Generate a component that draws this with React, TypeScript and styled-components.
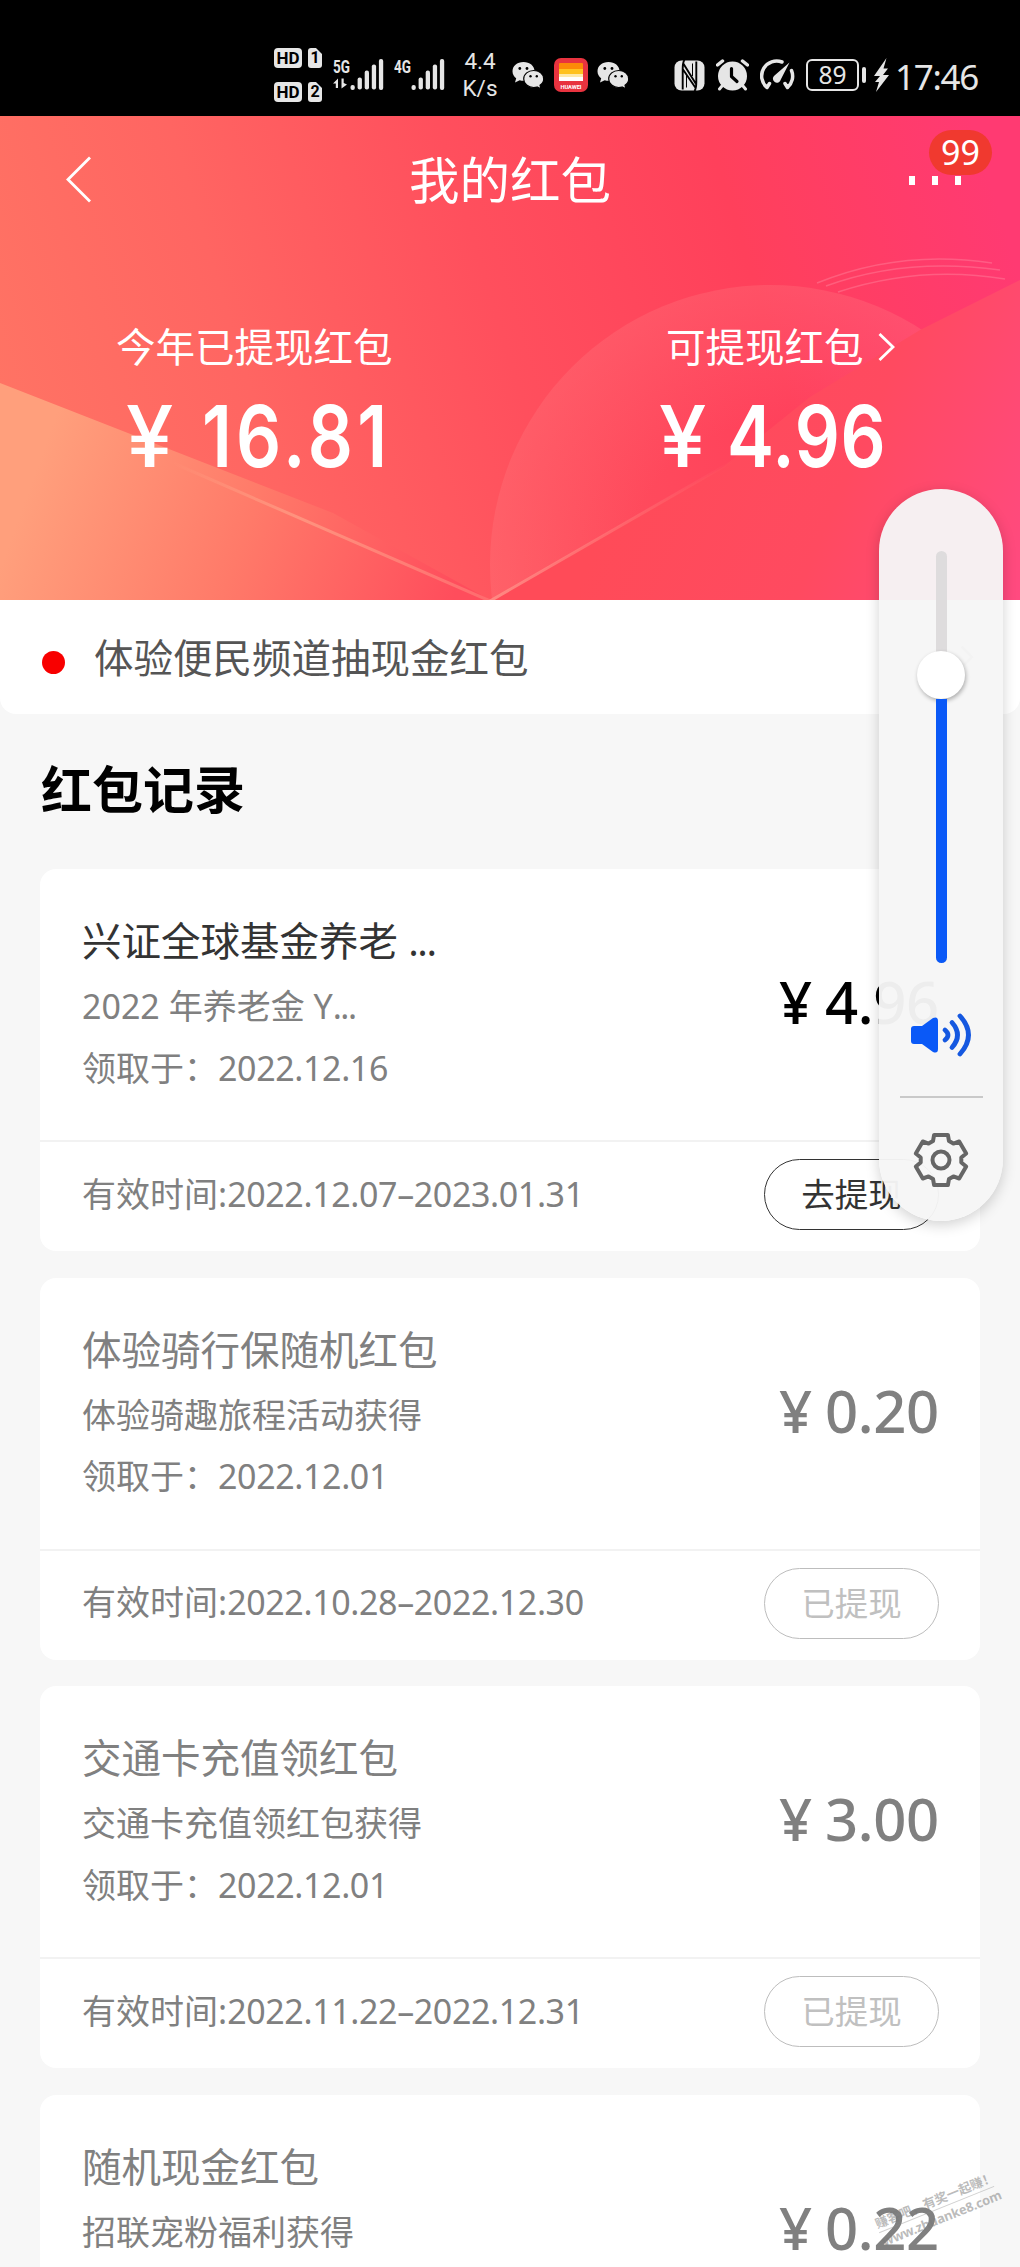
import React from "react";
import styled, { createGlobalStyle } from "styled-components";

const GlobalStyle = createGlobalStyle`
  * { box-sizing: border-box; }
  body {
    margin: 0;
    background: #f7f7f7;
    font-family: "Noto Sans", "Noto Sans CJK SC", sans-serif;
  }
  svg { display: block; }
`;

const Screen = styled.div`
  position: relative;
  width: 1020px;
  height: 2267px;
  overflow: hidden;
  background: #f7f7f7;
`;

/* ---------- status bar ---------- */

const StatusBar = styled.div`
  display: flex;
  align-items: center;
  height: 116px;
  padding: 34px 0 0 274px;
  background: #000;
  color: #e6e6e6;
`;

const StatusItem = styled.div<{ $w: number; $gap?: number }>`
  flex: none;
  width: ${(p) => p.$w}px;
  margin-left: ${(p) => p.$gap ?? 0}px;
`;

const SimColumn = styled(StatusItem)`
  display: flex;
  flex-direction: column;
  gap: 14px;
`;

const SimRow = styled.div`
  display: flex;
  gap: 6px;
`;

const HdTag = styled.span`
  width: 28px;
  height: 20px;
  border-radius: 4px;
  background: #e6e6e6;
  color: #000;
  font: 700 17px/20px Roboto, sans-serif;
  text-align: center;
`;

const SimTag = styled.span`
  width: 14px;
  height: 20px;
  border-radius: 3px;
  background: linear-gradient(225deg, #000 4px, #e6e6e6 4.5px);
  color: #000;
  font: 700 16px/20px Roboto, sans-serif;
  text-align: center;
`;

const NetSpeed = styled(StatusItem)`
  font: 400 22.5px/27px Roboto, sans-serif;
  text-align: center;
  white-space: nowrap;
`;

const Battery = styled(StatusItem)`
  display: flex;
  align-items: center;
  gap: 3px;
`;

const BatteryShell = styled.span`
  width: 53px;
  height: 32px;
  border: 2.5px solid #e6e6e6;
  border-radius: 6px;
  font: 400 24.5px/27px "Noto Sans", sans-serif;
  text-align: center;
`;

const BatteryTip = styled.span`
  width: 4px;
  height: 16px;
  border-radius: 2px;
  background: #e6e6e6;
`;

const Clock = styled(StatusItem)`
  font-size: 35px;
  line-height: 40px;
  padding-top: 4px;
  letter-spacing: -1.3px;
  white-space: nowrap;
`;

/* ---------- header ---------- */

const Header = styled.header`
  position: relative;
  height: 484px;
  color: #fff;
`;

const HeaderArt = styled.svg`
  position: absolute;
  inset: 0;
`;

const HeaderContent = styled.div`
  position: relative;
`;

const NavBar = styled.div`
  display: grid;
  grid-template-columns: 160px 1fr 160px;
  align-items: center;
  height: 128px;
`;

const NavTitle = styled.h1`
  margin: 0;
  font-size: 50.5px;
  font-weight: 400;
  line-height: 60px;
  text-align: center;
`;

const BackButton = styled.div`
  padding-left: 65px;
`;

const MoreButton = styled.div`
  position: relative;
  display: flex;
  gap: 17px;
  padding-left: 49px;
`;

const MoreDot = styled.i`
  width: 6px;
  height: 9px;
  background: #fff;
`;

const Badge = styled.span`
  position: absolute;
  left: 69px;
  top: -46px;
  width: 63px;
  height: 45px;
  border-radius: 23px;
  background: #f0392f;
  font-size: 34px;
  line-height: 45px;
  text-align: center;
`;

const Summary = styled.div`
  display: grid;
  grid-template-columns: 508px 512px;
  padding-top: 77px;
`;

const SummaryCell = styled.div<{ $indent: number }>`
  padding-left: ${(p) => p.$indent}px;
`;

const SummaryLabel = styled.div`
  display: flex;
  align-items: center;
  gap: 14px;
  font-size: 39.5px;
  line-height: 52px;
`;

const SummaryAmount = styled.div<{ $indent: number; $gap: number }>`
  display: flex;
  gap: ${(p) => p.$gap}px;
  height: 128px;
  margin-left: ${(p) => p.$indent}px;
  font: 600 85px/128px Inter, "Noto Sans", sans-serif;
`;

const SummaryYen = styled.span`
  font-weight: 500;
`;

const SummaryDigits = styled.span<{ $spread: number }>`
  letter-spacing: ${(p) => p.$spread}px;
  transform: scaleX(0.83);
  transform-origin: left;
`;

/* ---------- notice ---------- */

const Notice = styled.div`
  display: flex;
  align-items: center;
  height: 114px;
  padding: 0 46px 0 42px;
  border-radius: 0 0 16px 16px;
  background: #fff;
  color: #555;
  font-size: 39.5px;
  line-height: 56px;
`;

const RedDot = styled.i`
  width: 23px;
  height: 23px;
  margin: 11px 29px 0 0;
  border-radius: 50%;
  background: #f80000;
`;

const NoticeText = styled.span`
  flex: 1;
  padding-top: 2px;
`;

/* ---------- records ---------- */

const SectionTitle = styled.h2`
  height: 155px;
  margin: 0;
  padding-left: 41px;
  color: #000;
  font-size: 51px;
  font-weight: 700;
  line-height: 151px;
`;

const RecordList = styled.div`
  display: flex;
  flex-direction: column;
  gap: 26.5px;
  padding: 0 40px;
`;

const Card = styled.article`
  flex: none;
  height: 382px;
  border-radius: 16px;
  background: #fff;
  color: #808080;
`;

const CardBody = styled.div`
  display: flex;
  justify-content: space-between;
  height: 273px;
  padding: 39px 41px 0 42px;
  border-bottom: 2px solid #f2f2f2;
`;

const CardTitle = styled.div<{ $active?: boolean }>`
  margin-bottom: 2px;
  color: ${(p) => (p.$active ? "#333" : "#808080")};
  font-size: 39.5px;
  line-height: 66px;
`;

const CardLine = styled.div`
  font-size: 34px;
  line-height: 61.5px;
  white-space: nowrap;
`;

const Numeric = styled.span`
  letter-spacing: -0.38px;
`;

const Dots = styled.span`
  letter-spacing: -1.5px;
`;

const Amount = styled.div<{ $active?: boolean }>`
  display: flex;
  gap: 13px;
  align-self: flex-start;
  margin-top: 54px;
  color: ${(p) => (p.$active ? "#000" : "#808080")};
  font-size: 58px;
  font-weight: 500;
  line-height: 80px;
  letter-spacing: -0.3px;
`;

const CardFooter = styled.div`
  display: flex;
  align-items: center;
  justify-content: space-between;
  height: 109px;
  padding: 0 41px 4px 42px;
`;

const Action = styled.div<{ $active?: boolean }>`
  width: 175px;
  height: 71px;
  border: 1px solid ${(p) => (p.$active ? "#333" : "#bdbdbd")};
  border-radius: 36px;
  color: ${(p) => (p.$active ? "#333" : "#c0c0c0")};
  font-size: 33.5px;
  line-height: 69px;
  text-align: center;
`;

/* ---------- volume overlay ---------- */

const VolumePanel = styled.aside`
  position: absolute;
  left: 879px;
  top: 489px;
  display: flex;
  flex-direction: column;
  align-items: center;
  width: 124px;
  height: 732px;
  padding-top: 62px;
  border-radius: 62px;
  background: rgba(246, 246, 246, 0.965);
  box-shadow: 0 4px 14px rgba(0, 0, 0, 0.18);
`;

const Track = styled.div`
  display: flex;
  flex-direction: column;
  align-items: center;
  width: 11px;
  height: 412px;
  border-radius: 6px;
  background: #dedcdd;
`;

const Thumb = styled.div`
  flex: none;
  width: 48px;
  height: 48px;
  margin-top: 100px;
  border-radius: 50%;
  background: #fff;
  box-shadow: 1px 2px 4px rgba(0, 0, 0, 0.3);
`;

const TrackFill = styled.div`
  flex: 1;
  width: 11px;
  border-radius: 0 0 6px 6px;
  background: #0a59f7;
`;

const SpeakerSlot = styled.div`
  margin-top: 49px;
`;

const PanelDivider = styled.div`
  width: 83px;
  height: 2px;
  margin: 38px 0 32px;
  background: #c9c9c9;
`;

/* ---------- watermark ---------- */

const Watermark = styled.div`
  position: absolute;
  left: 875px;
  top: 2192px;
  width: 124px;
  color: rgba(120, 120, 120, 0.5);
  font-weight: 700;
  white-space: nowrap;
  transform: rotate(-22deg);
`;

const WatermarkTop = styled.div`
  font-size: 12.8px;
  line-height: 17px;
  border-bottom: 1px solid rgba(140, 140, 140, 0.4);
`;

const WatermarkUrl = styled.div`
  font-size: 13px;
  line-height: 19px;
  letter-spacing: -0.2px;
`;

function SignalIcon({ label, arrows }: { label: string; arrows?: boolean }) {
  return (
    <svg width="52" height="34" viewBox="0 0 52 34" fill="#e6e6e6">
      <text x="0" y="15" fontFamily="Roboto, sans-serif" fontWeight="700" fontSize="18" textLength="17" lengthAdjust="spacingAndGlyphs">
        {label}
      </text>
      {arrows && <path d="M0 25.500L5 20.500V30H2.800V25.500ZM8.500 20.500H10.700V25L14 26.500L8.500 30.500Z" />}
      {[0, 1, 2, 3, 4].map((i) => (
        <rect key={i} x={17.500 + i * 7.100} y={[27, 19.500, 12.500, 6.500, 1][i]} width="4.300" height={[5, 12, 19, 25, 31][i]} rx="2" />
      ))}
    </svg>
  );
}

function WeChatIcon() {
  return (
    <svg width="32" height="28" viewBox="0 0 32 28">
      <path d="M11.500 1C5 1 .5 5 .5 10.300c0 3 1.500 5.400 3.700 7L3 21.500l4.700-2.300c1.200.4 2.500.6 3.800.6 6.300 0 11-4.100 11-9.500S17.700 1 11.500 1Z" fill="#e6e6e6" />
      <path d="M21.700 9.500c-5.500 0-10 3.600-10 8.400s4.500 8.600 10 8.600c1.200 0 2.300-.2 3.300-.5l4 1.800-1-3.500c2.200-1.600 3.700-3.900 3.700-6.400 0-4.800-4.500-8.400-10-8.400Z" fill="#e6e6e6" stroke="#000" strokeWidth="1.200" />
      <g fill="#000">
        <circle cx="7.800" cy="7.500" r="1.400" />
        <circle cx="15" cy="7.500" r="1.400" />
        <circle cx="18.500" cy="15.300" r="1.200" />
        <circle cx="24.800" cy="15.300" r="1.200" />
      </g>
    </svg>
  );
}

function WalletAppIcon() {
  return (
    <svg width="34" height="34" viewBox="0 0 34 34">
      <rect width="34" height="34" rx="7" fill="#e8333f" />
      <rect x="5" y="5" width="24" height="7" rx="1" fill="#fc8a08" />
      <rect x="5" y="11" width="24" height="6" fill="#ffc21f" />
      <rect x="5" y="16" width="24" height="4" fill="#ffe9a8" />
      <rect x="5" y="19" width="24" height="4" fill="#fff" />
      <text x="6.500" y="30.500" fill="#fff" fontFamily="Roboto, sans-serif" fontSize="5.800" fontWeight="700" textLength="21">HUAWEI</text>
    </svg>
  );
}

function NfcIcon() {
  return (
    <svg width="31" height="31" viewBox="0 0 31 31">
      <rect x=".5" y=".5" width="30" height="30" rx="7" fill="#e6e6e6" />
      <path d="M8.700 29.500V9C8.700 4 9 2 10.500 0M9 3L22 24M22.300 1.500V22C22.300 27 22 29 20.500 31M22 28.500L9 9.500" fill="none" stroke="#000" strokeWidth="1.900" />
      <path d="M12.500 15V27.500M18.500 3.500V16" fill="none" stroke="#000" strokeWidth="1" />
    </svg>
  );
}

function AlarmIcon() {
  return (
    <svg width="33" height="32" viewBox="0 0 33 32">
      <circle cx="16.500" cy="17" r="14.500" fill="#e6e6e6" />
      <path d="M1.500 6L6.500 2M31.500 6L26.500 2" stroke="#e6e6e6" strokeWidth="3.500" strokeLinecap="round" />
      <path d="M6 27L3.500 30M27 27L29.500 30" stroke="#e6e6e6" strokeWidth="3" strokeLinecap="round" />
      <path d="M15.500 9.500V17.500L21 22.500" fill="none" stroke="#000" strokeWidth="3.200" strokeLinecap="round" strokeLinejoin="round" />
    </svg>
  );
}

function GaugeIcon() {
  return (
    <svg width="35" height="32" viewBox="0 0 35 32">
      <path d="M7 28.500A15 15 0 0 1 22 3M31.500 11.500A15 15 0 0 1 27.500 28.500M7 28.500L9.500 24.500M27.500 28.500L25 24.500" fill="none" stroke="#e6e6e6" strokeWidth="3.500" strokeLinecap="round" />
      <path d="M29.500 3.500L20.800 20.500A4 4 0 1 1 14.500 16.500Z" fill="#e6e6e6" />
    </svg>
  );
}

function HeaderBackground() {
  return (
    <HeaderArt width="1020" height="484" viewBox="0 0 1020 484">
      <defs>
        <linearGradient id="base" gradientUnits="userSpaceOnUse" x1="0" y1="330" x2="980" y2="30">
          <stop offset="0" stopColor="#ff7464" />
          <stop offset=".25" stopColor="#ff6562" />
          <stop offset=".5" stopColor="#ff4f5d" />
          <stop offset=".75" stopColor="#ff405b" />
          <stop offset="1" stopColor="#ff3a72" />
        </linearGradient>
        <linearGradient id="flap" gradientUnits="userSpaceOnUse" x1="30" y1="370" x2="440" y2="520">
          <stop offset="0" stopColor="#ff9f7c" />
          <stop offset=".5" stopColor="#ff7a69" />
          <stop offset="1" stopColor="#ff4d5c" />
        </linearGradient>
        <linearGradient id="fold" gradientUnits="userSpaceOnUse" x1="640" y1="320" x2="1020" y2="480">
          <stop offset="0" stopColor="#ff4b58" />
          <stop offset=".5" stopColor="#ff4a60" />
          <stop offset="1" stopColor="#ff4a80" />
        </linearGradient>
        <radialGradient id="disc" gradientUnits="userSpaceOnUse" cx="770" cy="449" r="280">
          <stop offset=".5" stopColor="#ff7a80" stopOpacity="0" />
          <stop offset="1" stopColor="#ff7a80" stopOpacity=".3" />
        </radialGradient>
        <linearGradient id="lineLeft">
          <stop offset="0" stopColor="#ffb08f" stopOpacity="0" />
          <stop offset=".4" stopColor="#ff9b84" stopOpacity=".8" />
          <stop offset="1" stopColor="#ff8a80" stopOpacity=".5" />
        </linearGradient>
        <linearGradient id="lineRight">
          <stop offset="0" stopColor="#ff9088" stopOpacity=".9" />
          <stop offset="1" stopColor="#ff8080" stopOpacity="0" />
        </linearGradient>
      </defs>
      <rect width="1020" height="484" fill="url(#base)" />
      <circle cx="770" cy="449" r="280" fill="url(#disc)" />
      <path d="M490 484L723 351L810 281L920 214L1020 164V484Z" fill="url(#fold)" />
      <path d="M0 267L133 319L333 397L490 484H0Z" fill="url(#flap)" />
      <path d="M173 347L490 485" stroke="url(#lineLeft)" strokeWidth="3" />
      <path d="M490 485L733 345" stroke="url(#lineRight)" strokeWidth="3" />
      <g fill="none" stroke="#ff8fa5" strokeOpacity=".4" strokeWidth="1.500">
        <path d="M817 167Q900 133 992 147" />
        <path d="M826 170Q905 141 1000 154" />
        <path d="M838 176Q920 149 1005 163" />
      </g>
    </HeaderArt>
  );
}

type RecordItem = {
  title: string;
  source: string;
  received: string;
  amount: string;
  period: string;
  active?: boolean;
  clipped?: boolean;
};

const records: RecordItem[] = [
  { title: "兴证全球基金养老 ", source: "2022 年养老金 Y", received: "2022.12.16", amount: "4.96", period: "2022.12.07–2023.01.31", active: true, clipped: true },
  { title: "体验骑行保随机红包", source: "体验骑趣旅程活动获得", received: "2022.12.01", amount: "0.20", period: "2022.10.28–2022.12.30" },
  { title: "交通卡充值领红包", source: "交通卡充值领红包获得", received: "2022.12.01", amount: "3.00", period: "2022.11.22–2022.12.31" },
  { title: "随机现金红包", source: "招联宠粉福利获得", received: "", amount: "0.22", period: "" },
];

function RecordCard({ item }: { item: RecordItem }) {
  return (
    <Card>
      <CardBody>
        <div>
          <CardTitle $active={item.active}>
            {item.title}
            {item.clipped && <Dots>...</Dots>}
          </CardTitle>
          <CardLine>
            {item.source}
            {item.clipped && <Dots>...</Dots>}
          </CardLine>
          {item.received && (
            <CardLine>领取于：<Numeric>{item.received}</Numeric></CardLine>
          )}
        </div>
        <Amount $active={item.active}>
          <span>¥</span>
          <span>{item.amount}</span>
        </Amount>
      </CardBody>
      {item.period && (
        <CardFooter>
          <CardLine>有效时间:<Numeric>{item.period}</Numeric></CardLine>
          <Action $active={item.active}>{item.active ? "去提现" : "已提现"}</Action>
        </CardFooter>
      )}
    </Card>
  );
}

function gearPath(cx: number, cy: number) {
  const points: string[] = [];
  for (let i = 0; i < 6; i++) {
    const mid = (i * 60 - 90) * (Math.PI / 180);
    [
      [-0.4, 20.5],
      [-0.27, 26],
      [0.27, 26],
      [0.4, 20.5],
    ].forEach(([a, r]) => points.push(`${(cx + r * Math.cos(mid + a)).toFixed(1)} ${(cy + r * Math.sin(mid + a)).toFixed(1)}`));
  }
  return `M${points.join("L")}Z`;
}

export default function App() {
  return (
    <Screen>
      <GlobalStyle />
      <StatusBar>
        <SimColumn $w={48}>
          <SimRow><HdTag>HD</HdTag><SimTag>1</SimTag></SimRow>
          <SimRow><HdTag>HD</HdTag><SimTag>2</SimTag></SimRow>
        </SimColumn>
        <StatusItem $w={52} $gap={11}><SignalIcon label="5G" arrows /></StatusItem>
        <StatusItem $w={52} $gap={9}><SignalIcon label="4G" /></StatusItem>
        <NetSpeed $w={36} $gap={16}>4.4<br />K/s</NetSpeed>
        <StatusItem $w={32} $gap={14}><WeChatIcon /></StatusItem>
        <StatusItem $w={34} $gap={10}><WalletAppIcon /></StatusItem>
        <StatusItem $w={32} $gap={9}><WeChatIcon /></StatusItem>
        <StatusItem $w={31} $gap={45}><NfcIcon /></StatusItem>
        <StatusItem $w={33} $gap={11}><AlarmIcon /></StatusItem>
        <StatusItem $w={35} $gap={11}><GaugeIcon /></StatusItem>
        <Battery $w={60} $gap={11}><BatteryShell>89</BatteryShell><BatteryTip /></Battery>
        <StatusItem $w={15} $gap={8}>
          <svg width="15" height="34" viewBox="0 0 15 34" fill="#e6e6e6">
            <path d="M12.500 0L0 18H6L1 24H5L2 34L15 17H9L14 10.500H9.500Z" />
          </svg>
        </StatusItem>
        <Clock $w={84} $gap={6}>17:46</Clock>
      </StatusBar>

      <Header>
        <HeaderBackground />
        <HeaderContent>
          <NavBar>
            <BackButton>
              <svg width="26" height="48" viewBox="0 0 26 48" fill="none" stroke="#fff" strokeWidth="2.800">
                <path d="M25 1.500L3 23.500L25 45.500" />
              </svg>
            </BackButton>
            <NavTitle>我的红包</NavTitle>
            <MoreButton>
              <MoreDot /><MoreDot /><MoreDot />
              <Badge>99</Badge>
            </MoreButton>
          </NavBar>
          <Summary>
            <SummaryCell $indent={116}>
              <SummaryLabel>今年已提现红包</SummaryLabel>
              <SummaryAmount $indent={10} $gap={29}>
                <SummaryYen>¥</SummaryYen>
                <SummaryDigits $spread={5}>16.81</SummaryDigits>
              </SummaryAmount>
            </SummaryCell>
            <SummaryCell $indent={158}>
              <SummaryLabel>
                可提现红包
                <svg width="17" height="28" viewBox="0 0 17 28" fill="none" stroke="#fff" strokeWidth="2.800">
                  <path d="M1.500 1L15 14L1.500 27" />
                </svg>
              </SummaryLabel>
              <SummaryAmount $indent={-7} $gap={21}>
                <SummaryYen>¥</SummaryYen>
                <SummaryDigits $spread={0.8}>4.96</SummaryDigits>
              </SummaryAmount>
            </SummaryCell>
          </Summary>
        </HeaderContent>
      </Header>

      <Notice>
        <RedDot />
        <NoticeText>体验便民频道抽现金红包</NoticeText>
        <svg width="14" height="24" viewBox="0 0 14 24" fill="none" stroke="#aaa" strokeWidth="2.500">
          <path d="M1.500 1.500L12 12L1.500 22.500" />
        </svg>
      </Notice>

      <SectionTitle>红包记录</SectionTitle>
      <RecordList>
        {records.map((item) => (
          <RecordCard key={item.title} item={item} />
        ))}
      </RecordList>

      <VolumePanel>
        <Track>
          <Thumb />
          <TrackFill />
        </Track>
        <SpeakerSlot>
          <svg width="62" height="46" viewBox="0 0 62 46">
            <path d="M4 14H12L23 6Q28 4 28 9V37Q28 42 23 40L12 32H4Q1 32 1 29V17Q1 14 4 14Z" fill="#0a59f7" />
            <g fill="none" stroke="#1558e0" strokeWidth="4.800" strokeLinecap="round">
              <path d="M35 18Q41 23 35 28" />
              <path d="M42 10.500Q53 23 42 35.500" />
              <path d="M50 4Q67 23 50 42" />
            </g>
          </svg>
        </SpeakerSlot>
        <PanelDivider />
        <svg width="62" height="60" viewBox="0 0 62 60" fill="none" stroke="#666" strokeWidth="4" strokeLinejoin="round">
          <path d={gearPath(31, 30)} />
          <circle cx="31" cy="30" r="8.500" />
        </svg>
      </VolumePanel>

      <Watermark>
        <WatermarkTop>赚客吧，有奖一起赚！</WatermarkTop>
        <WatermarkUrl>www.zhuanke8.com</WatermarkUrl>
      </Watermark>
    </Screen>
  );
}
